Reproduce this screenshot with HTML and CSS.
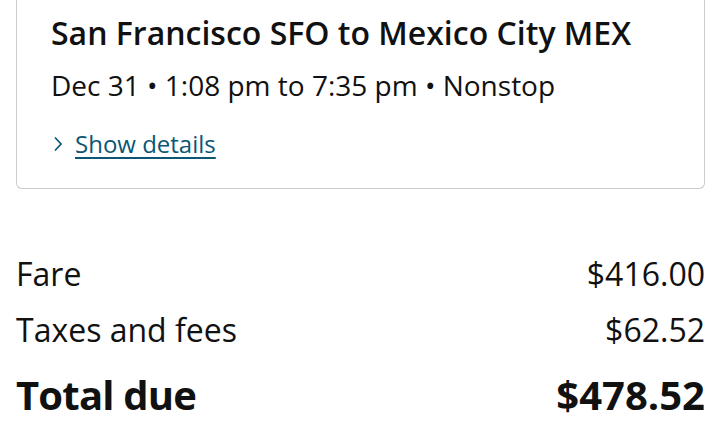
FILE: index.html
```html
<!DOCTYPE html>
<html lang="en">
<head>
<meta charset="utf-8">
<link rel="stylesheet" href="styles.css">
</head>
<body>
<div class="page">
  <section class="card">
    <h2 class="route">San Francisco SFO to Mexico City MEX</h2>
    <p class="times">Dec 31 • 1:08 pm to 7:35 pm • Nonstop</p>
    <a class="details" href="#"><svg class="chev" width="12" height="16" viewBox="0 0 12 16"><path d="M3 1.5 L9 8 L3 14.5" fill="none" stroke="#0b5674" stroke-width="1.7"/></svg><span class="details-text">Show details</span></a>
  </section>
  <div class="summary">
    <div class="row"><span>Fare</span><span>$416.00</span></div>
    <div class="row"><span>Taxes and fees</span><span>$62.52</span></div>
    <div class="row total"><span class="total-label">Total due</span><span>$478.52</span></div>
  </div>
</div>
</body>
</html>
```

FILE: styles.css
```css
html, body {
  margin: 0;
  padding: 0;
  background: #fff;
}
body {
  font-family: "Open Sans", "Noto Sans", sans-serif;
  color: #111;
}
.page {
  padding: 0 17px 0 16px;
}
.card {
  border: 1px solid #cccccc;
  border-top: none;
  border-radius: 0 0 6px 6px;
  padding: 11px 34px 28px 34px;
}
.route {
  margin: 0;
  font-size: 32px;
  font-weight: 600;
  line-height: 44px;
}
.times {
  margin: 11px 0 0;
  font-size: 28px;
  line-height: 38px;
}
.details {
  display: inline-flex;
  align-items: center;
  gap: 11px;
  margin-top: 24px;
  color: #0b5674;
  font-size: 24px;
  line-height: 32px;
  text-decoration: none;
}
.chev {
  margin-left: 1px;
}
.details-text {
  text-decoration: underline;
  text-underline-offset: 4px;
  text-decoration-thickness: 2px;
}
.summary {
  padding-top: 57px;
}
.row {
  display: flex;
  justify-content: space-between;
  font-size: 32px;
  line-height: 56px;
}
.total {
  font-size: 40px;
  font-weight: 700;
  line-height: 74px;
}
.total-label {
  letter-spacing: -0.8px;
}
```
